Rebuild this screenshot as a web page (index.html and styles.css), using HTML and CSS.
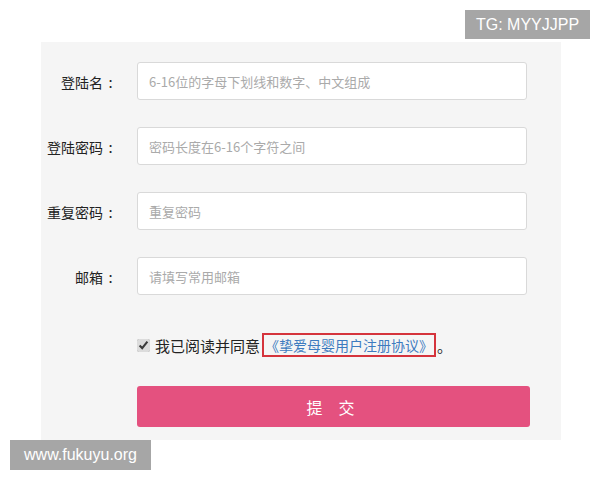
FILE: index.html
```html
<!DOCTYPE html>
<html lang="zh-CN">
<head>
   <meta charset="utf-8">
   <title>用户注册</title>
   <link rel="stylesheet" href="styles.css">
</head>
<body>

<div class="mark mark-top">TG: MYYJJPP</div>

<form class="reg-panel">
   <div class="row">
      <label class="row-label" for="f-name">登陆名<i class="colon">:</i></label>
      <input class="field" id="f-name" type="text" placeholder="6-16位的字母下划线和数字、中文组成">
   </div>
   <div class="row">
      <label class="row-label" for="f-pwd">登陆密码<i class="colon">:</i></label>
      <input class="field" id="f-pwd" type="password" placeholder="密码长度在6-16个字符之间">
   </div>
   <div class="row">
      <label class="row-label" for="f-pwd2">重复密码<i class="colon">:</i></label>
      <input class="field" id="f-pwd2" type="password" placeholder="重复密码">
   </div>
   <div class="row">
      <label class="row-label" for="f-mail">邮箱<i class="colon">:</i></label>
      <input class="field" id="f-mail" type="text" placeholder="请填写常用邮箱">
   </div>

   <div class="agree">
      <input class="agree-box" type="checkbox" checked>
      <span class="agree-text">我已阅读并同意</span>
      <a class="agree-link" href="#">《挚爱母婴用户注册协议》</a>
      <span class="agree-end">。</span>
   </div>

   <button class="submit" type="button">提交</button>
</form>

<div class="mark mark-bottom">www.fukuyu.org</div>

</body>
</html>
```

FILE: styles.css
```css
body {
   margin: 0;
   background: #fff;
   color: #333;
   font-family: "Noto Sans CJK SC", "Liberation Sans", sans-serif;
}

.reg-panel {
   width: 520px;
   height: 378px;
   margin: 42px 0 0 41px;
   padding-top: 20px;
   background: #f5f5f5;
}

.row {
   display: flex;
   align-items: center;
   height: 38px;
   margin-bottom: 27px;
}

.row-label {
   width: 77px;
   margin-right: 19px;
   text-align: right;
   font-size: 14px;
   color: #222;
   white-space: nowrap;
}

/* full-width colon, centred in its cell */
.colon {
   display: inline-block;
   width: 15px;
   text-align: center;
   font-style: normal;
   font-size: 15px;
}

.field {
   box-sizing: border-box;
   width: 390px;
   height: 38px;
   padding: 0 11px;
   border: 1px solid #d9d9d9;
   border-radius: 3px;
   background: #fff;
   font-family: inherit;
   font-size: 13px;
   color: #333;
   outline: none;
}

.field::placeholder {
   color: #aaa;
}

.agree {
   display: flex;
   align-items: center;
   height: 24px;
   margin: 38px 0 0 96px;
   font-size: 15px;
   color: #222;
}

.agree-box {
   width: 13px;
   height: 13px;
   margin: 0 5px 0 0;
   accent-color: #dcdcdc;
}

.agree-link {
   box-sizing: border-box;
   height: 24px;
   margin-left: 2px;
   padding: 0 1px;
   border: 2px solid #d5343c;
   color: #3d7bbf;
   font-size: 14px;
   line-height: 20px;
   text-decoration: none;
}

.agree-end {
   margin-left: 1px;
}

.submit {
   display: block;
   width: 393px;
   height: 41px;
   margin: 29px 0 0 96px;
   padding-left: 16px;
   border: 0;
   border-radius: 3px;
   background: #e4517f;
   color: #fff;
   font-family: inherit;
   font-size: 16px;
   letter-spacing: 16px;
   cursor: pointer;
}

.mark {
   position: absolute;
   height: 29px;
   line-height: 29px;
   background: #a6a6a6;
   color: #fff;
   font-family: "Liberation Sans", Arial, sans-serif;
   font-size: 16px;
}

.mark-top {
   top: 10px;
   left: 465px;
   width: 125px;
   text-align: center;
}

.mark-bottom {
   top: 440px;
   left: 10px;
   width: 141px;
   height: 30px;
   line-height: 30px;
   text-align: center;
}
```
